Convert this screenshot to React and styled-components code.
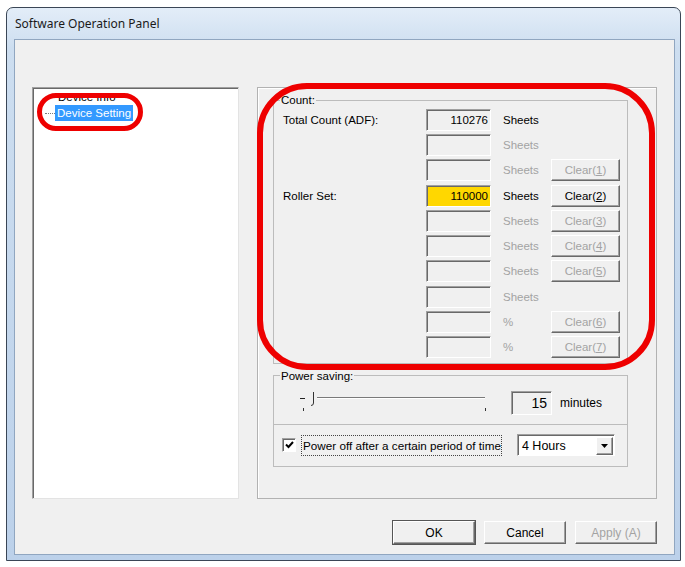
import styled, { createGlobalStyle } from 'styled-components'

const GlobalStyle = createGlobalStyle`
  body {
    margin: 0;
    background: #fff;
    font-family: "Liberation Sans", Arial, sans-serif;
    font-size: 11.5px;
    color: #000;
  }
`

const Page = styled.div`
  padding: 7px 0 0 6px;
`

const Window = styled.div`
  box-sizing: border-box;
  width: 675px;
  height: 554px;
  border: 1px solid #3a4656;
  border-radius: 7px 7px 0 0;
  background: linear-gradient(to bottom, #e3edf8 0px, #cddef0 40px, #bcd1ea 100%);
  padding: 0 5px 5px 7px;
  display: flex;
  flex-direction: column;
`

const TitleBar = styled.div`
  height: 31px;
  display: flex;
  align-items: center;
  padding-left: 1px;
  font-family: "Noto Sans", "Liberation Sans", sans-serif;
  font-size: 12px;
  color: #1a1a1a;
`

const Client = styled.div`
  position: relative;
  box-sizing: border-box;
  flex: 1;
  background: #f0f0f0;
  border: 1px solid #90a6c0;
  padding: 47px 0 0 17px;
  display: flex;
  flex-direction: column;
`

const MainRow = styled.div`
  display: flex;
  gap: 18px;
`

const TreeBox = styled.div`
  box-sizing: border-box;
  width: 207px;
  height: 412px;
  background: #fff;
  border: 1px solid;
  border-color: #a0a0a0 #e3e3e3 #e3e3e3 #a0a0a0;
  box-shadow: inset 1px 1px 0 #696969;
  padding: 1px 0 0 0;
`

const TreeItem = styled.div`
  display: flex;
  align-items: center;
  height: 16px;
  padding-left: ${({ $indent }) => $indent}px;
`

const TreeLine = styled.span`
  width: 10px;
  border-top: 1px dotted #7a7a7a;
`

const TreeLabel = styled.span`
  padding: 1px 2px;
  line-height: 14px;
  background: ${({ $selected }) => ($selected ? '#3399ff' : 'transparent')};
  color: ${({ $selected }) => ($selected ? '#fff' : '#000')};
`

const Panel = styled.div`
  box-sizing: border-box;
  width: 400px;
  height: 412px;
  border: 1px solid #b2b2b2;
  box-shadow: inset 1px 1px 0 #fff;
  padding: 5px 0 0 15px;
`

const Group = styled.fieldset`
  box-sizing: border-box;
  width: 355px;
  margin: ${({ $top }) => $top || 0}px 0 0 0;
  border: 1px solid #bcbcbc;
  padding: 0 7px ${({ $bottom }) => $bottom || 0}px 9px;
  min-inline-size: 0;
`

const Legend = styled.legend`
  margin-left: -3px;
  padding: 0 1px;
  line-height: 14px;
`

const CountGrid = styled.div`
  margin-top: 2px;
  display: grid;
  grid-template-columns: 143px 65px 60px 69px;
  grid-auto-rows: 22px;
  row-gap: 3.22px;
  align-items: center;
`

const RowLabel = styled.span``

const Field = styled.div`
  box-sizing: border-box;
  height: 22px;
  border: 1px solid;
  border-color: #a0a0a0 #fff #fff #a0a0a0;
  box-shadow: inset 1px 1px 0 #696969;
  background: ${({ $yellow }) => ($yellow ? '#ffd700' : '#f0f0f0')};
  text-align: right;
  padding: 3px 2px 0 0;
  line-height: 14px;
`

const Unit = styled.span`
  padding-left: 12px;
  color: ${({ $disabled }) => ($disabled ? '#a3a3a3' : '#000')};
`

const Button = styled.div`
  box-sizing: border-box;
  width: ${({ $w }) => $w || 69}px;
  height: ${({ $h }) => $h || 22}px;
  display: flex;
  align-items: center;
  justify-content: center;
  background: #f0f0f0;
  border: 1px solid;
  border-color: #fff #696969 #696969 #fff;
  box-shadow: inset -1px -1px 0 #a0a0a0 ${({ $default }) => ($default ? ', 0 0 0 1px #555' : '')};
  color: ${({ $disabled }) => ($disabled ? '#a3a3a3' : '#000')};
`

const SliderRow = styled.div`
  display: flex;
  align-items: center;
  height: 41px;
  padding-left: 15px;
`

const MinutesBox = styled(Field)`
  width: 41px;
  height: 24px;
  margin-left: 21px;
  padding: 3px 4px 0 0;
  font-size: 14px;
  line-height: 17px;
`

const Minutes = styled.span`
  margin-left: 8px;
  font-size: 12px;
`

const CheckRow = styled.div`
  box-sizing: border-box;
  height: 42px;
  width: 355px;
  border: 1px solid #bcbcbc;
  border-top: none;
  display: flex;
  align-items: center;
  padding-left: 8px;
`

const Check = styled.div`
  box-sizing: border-box;
  width: 14px;
  height: 14px;
  background: #fff;
  border: 1px solid;
  border-color: #a0a0a0 #fff #fff #a0a0a0;
  box-shadow: inset 1px 1px 0 #696969;
  display: flex;
  align-items: center;
  justify-content: center;
`

const CheckLabel = styled.span`
  margin-left: 5px;
  padding: 2px 0 2px 1px;
  border: 1px dotted #444;
  font-size: 11.7px;
  line-height: 15px;
`

const Select = styled.div`
  box-sizing: border-box;
  margin-left: 15px;
  width: 98px;
  height: 22px;
  background: #fff;
  border: 1px solid;
  border-color: #a0a0a0 #fff #fff #a0a0a0;
  box-shadow: inset 1px 1px 0 #696969;
  display: flex;
  align-items: center;
  padding: 1px 1px 0 4px;
  font-size: 12.5px;
`

const SelectText = styled.span`
  flex: 1;
`

const ArrowButton = styled.div`
  box-sizing: border-box;
  width: 17px;
  height: 18px;
  background: #f0f0f0;
  border: 1px solid;
  border-color: #fff #696969 #696969 #fff;
  box-shadow: inset -1px -1px 0 #a0a0a0;
  display: flex;
  align-items: center;
  justify-content: center;
`

const ButtonRow = styled.div`
  display: flex;
  justify-content: flex-end;
  gap: 9px;
  margin-top: 22px;
  padding-right: 17px;
  font-size: 12px;
`

const Mark = styled.div`
  position: absolute;
  box-sizing: border-box;
  left: ${({ $x }) => $x}px;
  top: ${({ $y }) => $y}px;
  width: ${({ $w }) => $w}px;
  height: ${({ $h }) => $h}px;
  border: ${({ $s }) => $s}px solid #ee0000;
  border-radius: ${({ $r }) => $r}px;
  pointer-events: none;
`

const rows = [
  { label: 'Total Count (ADF):', value: '110276', unit: 'Sheets', active: true },
  { unit: 'Sheets' },
  { unit: 'Sheets', clear: '1' },
  { label: 'Roller Set:', value: '110000', unit: 'Sheets', active: true, yellow: true, clear: '2', enabled: true },
  { unit: 'Sheets', clear: '3' },
  { unit: 'Sheets', clear: '4' },
  { unit: 'Sheets', clear: '5' },
  { unit: 'Sheets' },
  { unit: '%', clear: '6' },
  { unit: '%', clear: '7' },
]

const Slider = () => (
  <svg width="192" height="24" viewBox="0 0 192 24">
    <line x1="2" y1="7.5" x2="7" y2="7.5" stroke="#222" />
    <line x1="19" y1="6.5" x2="187" y2="6.5" stroke="#7a7a7a" />
    <line x1="19" y1="7.5" x2="187" y2="7.5" stroke="#fff" />
    <path d="M15.5 1 L15.5 12 Q15.5 14.5 13 14.5" fill="none" stroke="#333" />
    <line x1="5.5" y1="17" x2="5.5" y2="20" stroke="#333" />
    <line x1="187.5" y1="17" x2="187.5" y2="20" stroke="#333" />
  </svg>
)

const Row = ({ r }) => (
  <>
    <RowLabel>{r.label}</RowLabel>
    <Field $yellow={r.yellow}>{r.value}</Field>
    <Unit $disabled={!r.active}>{r.unit}</Unit>
    {r.clear ? (
      <Button $disabled={!r.enabled}>
        Clear(<u>{r.clear}</u>)
      </Button>
    ) : (
      <span />
    )}
  </>
)

const App = () => (
  <>
    <GlobalStyle />
    <Page>
      <Window>
        <TitleBar>Software Operation Panel</TitleBar>
        <Client>
          <MainRow>
            <TreeBox>
              <TreeItem $indent={23}>
                <TreeLabel>Device Info</TreeLabel>
              </TreeItem>
              <TreeItem $indent={12}>
                <TreeLine />
                <TreeLabel $selected>Device Setting</TreeLabel>
              </TreeItem>
            </TreeBox>
            <Panel>
              <Group $bottom={5}>
                <Legend>Count:</Legend>
                <CountGrid>
                  {rows.map((r, i) => (
                    <Row key={i} r={r} />
                  ))}
                </CountGrid>
              </Group>
              <Group $top={5}>
                <Legend>Power saving:</Legend>
                <SliderRow>
                  <Slider />
                  <MinutesBox>15</MinutesBox>
                  <Minutes>minutes</Minutes>
                </SliderRow>
              </Group>
              <CheckRow>
                <Check>
                  <svg width="9" height="8" viewBox="0 0 9 8">
                    <path d="M1 3.5 L3.5 6 L8 1" fill="none" stroke="#000" strokeWidth="2" />
                  </svg>
                </Check>
                <CheckLabel>Power off after a certain period of time</CheckLabel>
                <Select>
                  <SelectText>4 Hours</SelectText>
                  <ArrowButton>
                    <svg width="7" height="4" viewBox="0 0 7 4">
                      <path d="M0 0 L7 0 L3.5 4 Z" fill="#000" />
                    </svg>
                  </ArrowButton>
                </Select>
              </CheckRow>
            </Panel>
          </MainRow>
          <ButtonRow>
            <Button $w={82} $h={23} $default>OK</Button>
            <Button $w={82} $h={23}>Cancel</Button>
            <Button $w={82} $h={23} $disabled>Apply (A)</Button>
          </ButtonRow>
          <Mark $x={22} $y={53} $w={106} $h={38} $s={5} $r={19} />
          <Mark $x={242} $y={43} $w={398} $h={287} $s={6} $r={50} />
        </Client>
      </Window>
    </Page>
  </>
)

export default App
